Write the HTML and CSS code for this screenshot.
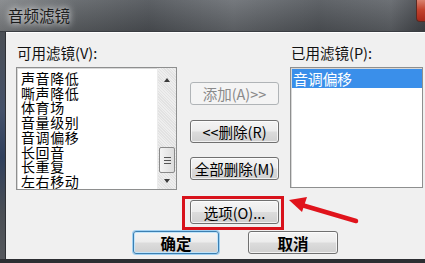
FILE: index.html
```html
<!DOCTYPE html>
<html lang="zh">
<head>
<meta charset="utf-8">
<link rel="stylesheet" href="styles.css">
</head>
<body>
<div class="window">
  <div class="titlebar">
    <span class="title">音频滤镜</span>
    <span class="close"></span>
  </div>
  <div class="frame">
    <div class="edge"></div>
    <div class="content">
      <div class="main">
        <div class="col-left">
          <div class="label">可用滤镜(V):</div>
          <div class="list list-left">
            <ul class="items">
              <li>声音降低</li>
              <li>嘶声降低</li>
              <li>体育场</li>
              <li>音量级别</li>
              <li>音调偏移</li>
              <li>长回音</li>
              <li>长重复</li>
              <li>左右移动</li>
            </ul>
            <div class="scrollbar">
              <span class="arrow up"></span>
              <span class="track"></span>
              <span class="thumb"><i></i><i></i><i></i></span>
              <span class="arrow down"></span>
            </div>
          </div>
        </div>
        <div class="col-mid">
          <div class="btn disabled">添加(A)&gt;&gt;</div>
          <div class="btn b2">&lt;&lt;删除(R)</div>
          <div class="btn b3">全部删除(M)</div>
          <div class="opt-wrap">
            <div class="btn">选项(O)...</div>
            <span class="redbox"></span>
          </div>
        </div>
        <div class="col-right">
          <div class="label">已用滤镜(P):</div>
          <div class="list list-right">
            <div class="sel">音调偏移</div>
          </div>
        </div>
      </div>
      <div class="footer">
        <div class="btn big default">确定</div>
        <div class="btn big cancel">取消</div>
      </div>
      <svg class="pointer" width="90" height="45" viewBox="0 0 90 45">
        <line x1="76" y1="31" x2="20" y2="14.5" stroke="#e0141c" stroke-width="4.5" stroke-linecap="round"/>
        <polygon points="9,10 27,7 22,22" fill="#e0141c"/>
      </svg>
    </div>
  </div>
  <div class="bottom"></div>
</div>
</body>
</html>
```

FILE: styles.css
```css
* { box-sizing: border-box; }
html, body { margin: 0; padding: 0; }
body {
  width: 425px;
  height: 263px;
  overflow: hidden;
  font-family: "Noto Sans CJK SC", "Noto Sans", sans-serif;
  background: #3c4046;
}
.window {
  width: 425px;
  height: 263px;
  display: flex;
  flex-direction: column;
}
.titlebar {
  height: 32px;
  display: flex;
  align-items: flex-start;
  justify-content: space-between;
  background:
    linear-gradient(180deg, rgba(255,255,255,0.06) 0%, rgba(0,0,0,0.18) 100%),
    linear-gradient(90deg, #85888b 0%, #62666a 18%, #53575c 35%, #6d7176 55%, #565a5f 75%, #64686d 92%, #44474c 100%);
  border-bottom: 1px solid #3a3d42;
}
.title {
  margin: 5px 0 0 8px;
  font-size: 15.5px;
  line-height: 20px;
  color: #1c1c1c;
  text-shadow: 0 0 6px rgba(255,255,255,0.85), 0 0 10px rgba(255,255,255,0.6);
}
.close {
  width: 9px;
  height: 22px;
  border-bottom-left-radius: 4px;
  background: linear-gradient(180deg, #d9826f 0%, #c3442f 45%, #a8281a 100%);
  border-left: 1px solid #5a2a22;
  border-bottom: 1px solid #5a2a22;
}
.frame {
  flex: 1;
  display: flex;
}
.edge {
  width: 6px;
  background: linear-gradient(180deg, #4b4f55 0%, #44516a 35%, #2f3f5c 55%, #4a4e54 80%, #55585d 100%);
  border-right: 1px solid #2e3034;
}
.content {
  position: relative;
  flex: 1;
  background: #f0f0f0;
  border-top: 1px solid #ffffff;
  padding: 11px 2px 0 10px;
  display: flex;
  flex-direction: column;
}
.main {
  display: flex;
  height: 169px;
}
.label {
  font-size: 14.5px;
  line-height: 17px;
  height: 17px;
  color: #111;
  white-space: nowrap;
  margin-left: 1px;
}
.col-left {
  width: 161px;
  display: flex;
  flex-direction: column;
}
.list {
  margin-top: 6px;
  background: #ffffff;
  border: 1px solid #8e8f8f;
  box-shadow: inset 1px 1px 0 #d8d8d8;
}
.list-left {
  height: 123px;
  display: flex;
}
.items {
  flex: 1;
  list-style: none;
  margin: 0;
  padding: 3px 0 0 4px;
  font-size: 14px;
  line-height: 14.7px;
  color: #000;
  overflow: hidden;
}
.items li { white-space: nowrap; letter-spacing: 0.6px; }
.scrollbar {
  width: 19px;
  display: flex;
  flex-direction: column;
  align-items: center;
  background: repeating-linear-gradient(45deg, #eeeeee 0 1px, #e2e2e2 1px 2px);
  border-left: 1px solid #ececec;
  padding: 10px 0 6px;
}
.arrow {
  width: 0;
  height: 0;
  border-left: 3.5px solid transparent;
  border-right: 3.5px solid transparent;
}
.arrow.up { border-bottom: 4px solid #3a3a3a; }
.arrow.down { border-top: 4px solid #3a3a3a; }
.track { flex: 1; }
.thumb {
  width: 16px;
  height: 26px;
  margin-bottom: 6px;
  border: 1px solid #8a8a8a;
  border-radius: 2px;
  background: linear-gradient(90deg, #f4f4f4, #dcdcdc);
  display: flex;
  flex-direction: column;
  align-items: center;
  justify-content: center;
  gap: 2px;
}
.thumb i {
  display: block;
  width: 7px;
  height: 1px;
  background: #555;
}
.col-mid {
  width: 89px;
  margin-left: 13px;
  padding-top: 38px;
  display: flex;
  flex-direction: column;
}
.btn {
  height: 23px;
  border: 1px solid #707070;
  border-radius: 3px;
  background: linear-gradient(180deg, #f4f4f4 0%, #ececec 48%, #dcdcdc 52%, #d0d0d0 100%);
  box-shadow: inset 0 0 0 1px rgba(255,255,255,0.7);
  display: flex;
  align-items: center;
  justify-content: center;
  font-size: 14.5px;
  color: #000;
  white-space: nowrap;
}
.btn.disabled {
  border-color: #b0b4b7;
  background: #f4f4f4;
  color: #8a8a8a;
  box-shadow: none;
}
.b2 { margin-top: 15px; }
.b3 { margin-top: 14px; }
.opt-wrap {
  position: relative;
  margin-top: 20px;
}
.opt-wrap .btn { height: 24px; }
.redbox {
  position: absolute;
  top: -4px;
  left: -8px;
  right: -5px;
  bottom: -6px;
  border: 3.5px solid #d8121b;
}
.col-right {
  flex: 1;
  margin-left: 11px;
  display: flex;
  flex-direction: column;
}
.list-right {
  height: 121px;
  padding: 1px 0 0 1px;
}
.sel {
  height: 19px;
  background: #3a8fea;
  color: #fff;
  font-size: 15px;
  line-height: 19px;
  padding-left: 1px;
  letter-spacing: -0.3px;
}
.footer {
  display: flex;
  padding-left: 117px;
  margin-top: 18px;
}
.btn.big {
  height: 23px;
  font-size: 15.5px;
  font-weight: 700;
}
.btn.default {
  width: 86px;
  border-color: #3c7fb1;
  box-shadow: 0 0 0 1px #9fd0f2, inset 0 0 0 1px #bfe4fb;
}
.btn.cancel {
  width: 90px;
  margin-left: 29px;
}
.pointer {
  position: absolute;
  left: 274px;
  top: 157px;
}
.bottom {
  height: 4px;
  background: #2c2e32;
}
```
